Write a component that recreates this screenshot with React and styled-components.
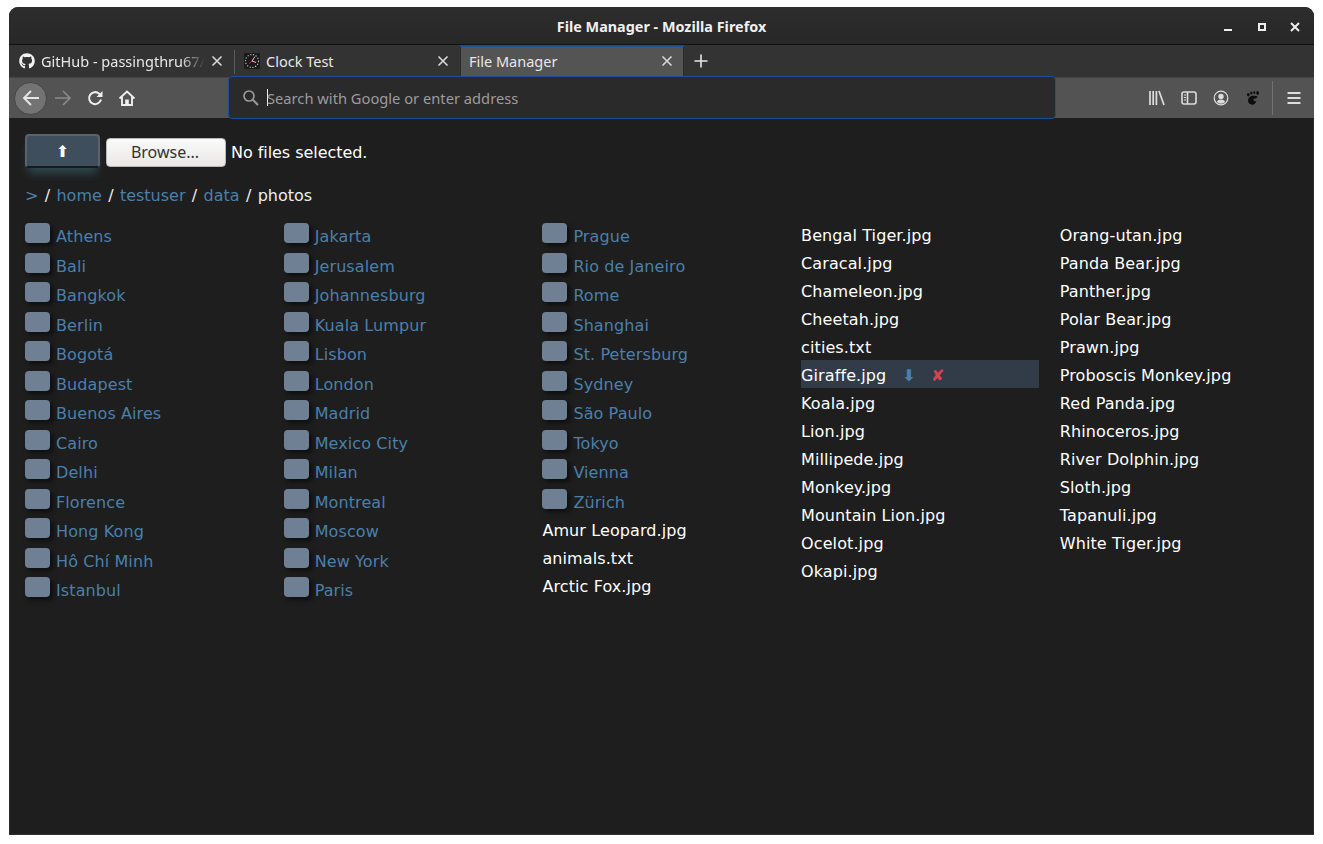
import React from 'react';
import styled, { createGlobalStyle } from 'styled-components';
import { FaGithub } from 'react-icons/fa';

const GlobalStyle = createGlobalStyle`
  html, body {
    margin: 0;
    padding: 0;
    background: #fff;
  }
`;

const Desktop = styled.div`
  width: 1323px;
  height: 844px;
  padding: 7px 9px 9px;
  box-sizing: border-box;
  background: #fff;
`;

const Window = styled.div`
  height: 100%;
  display: flex;
  flex-direction: column;
  background: #1e1e1e;
  border-radius: 9px 9px 0 0;
  overflow: hidden;
  position: relative;
  font-family: 'Noto Sans', sans-serif;
`;

const TitleBar = styled.div`
  height: 38px;
  flex: none;
  box-sizing: border-box;
  display: flex;
  align-items: center;
  justify-content: center;
  position: relative;
  padding-top: 1px;
  background: linear-gradient(#2d2d2d, #272727);
  border-bottom: 1px solid #111;
  color: #f0f0f0;
  font-size: 14.4px;
  font-weight: 700;
`;

const WindowControls = styled.div`
  position: absolute;
  right: 13px;
  top: 14px;
  display: flex;
  gap: 21.5px;
  align-items: center;
  height: 12px;
`;

const TabStrip = styled.div`
  height: 32px;
  flex: none;
  display: flex;
  background: #333;
  color: #e8e8e8;
  font-size: 14.5px;
`;

const Tab = styled.div`
  box-sizing: border-box;
  width: ${(p) => p.$width}px;
  height: 32px;
  display: flex;
  align-items: center;
  gap: 6px;
  padding: 0 11px 0 ${(p) => p.$pad}px;
  background: ${(p) => (p.$active ? '#545454' : 'transparent')};
  box-shadow: ${(p) =>
    p.$active ? 'inset 0 2px 0 #1d4f96, inset 1px 0 0 #2a2a2a, inset -1px 0 0 #2a2a2a' : 'none'};
`;

const TabTitle = styled.span`
  flex: 1;
  white-space: nowrap;
  overflow: hidden;
  ${(p) => p.$fade && `
    -webkit-mask-image: linear-gradient(to right, #000 85%, transparent);
    mask-image: linear-gradient(to right, #000 85%, transparent);
  `}
`;

const TabDivider = styled.div`
  width: 1px;
  height: 24px;
  margin-top: 5px;
  background: #5a5a5a;
  flex: none;
`;

const NewTab = styled.div`
  width: 33px;
  display: flex;
  align-items: center;
  justify-content: center;
`;

const Toolbar = styled.div`
  height: 41px;
  flex: none;
  box-sizing: border-box;
  display: flex;
  align-items: center;
  padding: 0 4px 0 5px;
  background: #535353;
  border-top: 1px solid #444;
  position: relative;
`;

const BackButton = styled.div`
  width: 33px;
  height: 33px;
  box-sizing: border-box;
  border-radius: 50%;
  background: #737373;
  border: 1px solid #454545;
  display: flex;
  align-items: center;
  justify-content: center;
  flex: none;
`;

const NavButton = styled.div`
  width: 32px;
  height: 32px;
  display: flex;
  align-items: center;
  justify-content: center;
  flex: none;
`;

const UrlBar = styled.div`
  position: absolute;
  left: 219px;
  top: -2px;
  width: 828px;
  height: 43px;
  box-sizing: border-box;
  display: flex;
  align-items: center;
  padding-left: 13px;
  gap: 7px;
  background: #2a2a2a;
  border: 1px solid #1d4f96;
  border-radius: 4px;
  color: #9c9c9c;
  font-size: 14.7px;
`;

const Caret = styled.span`
  width: 1px;
  height: 17px;
  background: #eee;
  margin-right: -8px;
`;

const ToolIcons = styled.div`
  margin-left: auto;
  display: flex;
  align-items: center;
  height: 100%;
`;

const ToolIcon = styled.div`
  width: 32px;
  display: flex;
  justify-content: center;
`;

const ToolSep = styled.div`
  width: 1px;
  height: 34px;
  background: #727272;
  margin: 0 5px 0 3px;
`;

const Content = styled.div`
  flex: 1;
  padding: 16px 15px 0;
  font-family: 'DejaVu Sans', sans-serif;
  font-size: 16px;
  color: #fff;
  background: #1e1e1e;
  border-left: 1px solid #2a2a2a;
  border-right: 1px solid #2a2a2a;
  border-bottom: 1px solid #333;
`;

const UploadRow = styled.div`
  display: flex;
  align-items: center;
  height: 34px;
`;

const UploadButton = styled.div`
  box-sizing: border-box;
  width: 75px;
  height: 34px;
  border-radius: 4px;
  background: #3f4e5c;
  border: 2px solid #5c6268;
  border-bottom-color: #1a1a1a;
  box-shadow: 0 8px 10px -3px rgba(70, 130, 145, 0.45);
  display: flex;
  align-items: center;
  justify-content: center;
  font-size: 16px;
`;

const BrowseButton = styled.div`
  box-sizing: border-box;
  width: 120px;
  height: 29px;
  margin: 3px 5px 0 6px;
  padding: 0 2px 2px 0;
  border-radius: 4px;
  background: linear-gradient(#fafafa, #e9e8e6);
  border: 1px solid #b8b8b8;
  color: #333;
  display: flex;
  align-items: center;
  justify-content: center;
  font-family: 'Noto Sans', sans-serif;
  font-size: 16px;
`;

const FileStatus = styled.span`
  padding-top: 2px;
  letter-spacing: -0.05px;
`;

const Breadcrumb = styled.div`
  margin-top: 18px;
  height: 20px;
  line-height: 20px;
  color: #eee;
  white-space: pre;
`;

const Crumb = styled.span`
  color: #4a80ab;
`;

const CrumbSep = styled.span`
  margin: 0 1.25px;
`;

const Columns = styled.div`
  margin-top: 16px;
  display: grid;
  grid-template-columns: repeat(5, 258.7px);
  letter-spacing: 0.1px;
`;

const Column = styled.div`
  display: flex;
  flex-direction: column;
  align-items: flex-start;
`;

const FileList = styled(Column)`
  margin-top: -2px;
`;

const FolderRow = styled.div`
  height: 29.5px;
  display: flex;
  align-items: center;
  gap: 6px;
  color: #4a80ab;
`;

const FolderIcon = styled.span`
  width: 25px;
  height: 20px;
  margin-top: -7px;
  border-radius: 4px;
  background: #6f8094;
  box-shadow: 3px 3px 5px rgba(0, 0, 0, 0.55);
`;

const FileRow = styled.div`
  box-sizing: border-box;
  height: 28px;
  line-height: 32px;
  width: 238px;
  display: flex;
  background: ${(p) => (p.$hover ? '#323c48' : 'transparent')};
`;

const ActionIcon = styled.span`
  width: 15px;
  margin-left: ${(p) => p.$gap}px;
  text-align: center;
  color: ${(p) => p.$color};
  font-size: 16px;
  font-weight: 700;
`;

const col1 = ['Athens', 'Bali', 'Bangkok', 'Berlin', 'Bogotá', 'Budapest', 'Buenos Aires', 'Cairo', 'Delhi', 'Florence', 'Hong Kong', 'Hô Chí Minh', 'Istanbul'];
const col2 = ['Jakarta', 'Jerusalem', 'Johannesburg', 'Kuala Lumpur', 'Lisbon', 'London', 'Madrid', 'Mexico City', 'Milan', 'Montreal', 'Moscow', 'New York', 'Paris'];
const col3 = ['Prague', 'Rio de Janeiro', 'Rome', 'Shanghai', 'St. Petersburg', 'Sydney', 'São Paulo', 'Tokyo', 'Vienna', 'Zürich'];
const col3Files = ['Amur Leopard.jpg', 'animals.txt', 'Arctic Fox.jpg'];
const col4 = ['Bengal Tiger.jpg', 'Caracal.jpg', 'Chameleon.jpg', 'Cheetah.jpg', 'cities.txt', 'Giraffe.jpg', 'Koala.jpg', 'Lion.jpg', 'Millipede.jpg', 'Monkey.jpg', 'Mountain Lion.jpg', 'Ocelot.jpg', 'Okapi.jpg'];
const col5 = ['Orang-utan.jpg', 'Panda Bear.jpg', 'Panther.jpg', 'Polar Bear.jpg', 'Prawn.jpg', 'Proboscis Monkey.jpg', 'Red Panda.jpg', 'Rhinoceros.jpg', 'River Dolphin.jpg', 'Sloth.jpg', 'Tapanuli.jpg', 'White Tiger.jpg'];

const Close = () => (
  <svg width="12" height="12" viewBox="0 0 12 12" style={{ flex: 'none' }}>
    <path d="M1.5 1.5l9 9M10.5 1.5l-9 9" stroke="#d8d8d8" strokeWidth="1.6" />
  </svg>
);

const ClockFavicon = () => (
  <svg width="16" height="16" viewBox="0 0 16 16" style={{ flex: 'none' }}>
    <rect width="16" height="16" fill="#1a1a1a" />
    <circle cx="8" cy="8" r="6.5" fill="none" stroke="#bbb" strokeWidth="1.2" strokeDasharray="1.2 1.6" />
    <path d="M8 8L11 3.500M8 8l4 1.500" stroke="#ccc" strokeWidth="1" />
    <path d="M8 8L5.500 10.500" stroke="#b33" strokeWidth="1" />
  </svg>
);

const Folder = ({ name }) => (
  <FolderRow>
    <FolderIcon />
    {name}
  </FolderRow>
);

const Sep = () => <CrumbSep> / </CrumbSep>;

const App = () => (
  <Desktop>
    <GlobalStyle />
    <Window>
      <TitleBar>
        File Manager - Mozilla Firefox
        <WindowControls>
          <svg width="12" height="12" viewBox="0 0 12 12">
            <rect x="2" y="8" width="8" height="2" fill="#eee" />
          </svg>
          <svg width="12" height="12" viewBox="0 0 12 12">
            <path d="M2 2h8v8H2z M4 4v4h4V4z" fill="#eee" fillRule="evenodd" />
          </svg>
          <svg width="12" height="12" viewBox="0 0 12 12">
            <path d="M2 2l8 8M10 2l-8 8" stroke="#eee" strokeWidth="2" />
          </svg>
        </WindowControls>
      </TitleBar>

      <TabStrip>
        <Tab $width={225} $pad={10}>
          <FaGithub size={16} color="#f2f2f2" style={{ flex: 'none' }} />
          <TabTitle $fade>GitHub - passingthru67/v</TabTitle>
          <Close />
        </Tab>
        <TabDivider />
        <Tab $width={225} $pad={9}>
          <ClockFavicon />
          <TabTitle>Clock Test</TabTitle>
          <Close />
        </Tab>
        <Tab $width={224} $pad={9} $active>
          <TabTitle>File Manager</TabTitle>
          <Close />
        </Tab>
        <NewTab>
          <svg width="16" height="16" viewBox="0 0 16 16">
            <path d="M8 1.500v13M1.500 8h13" stroke="#e8e8e8" strokeWidth="1.600" />
          </svg>
        </NewTab>
      </TabStrip>

      <Toolbar>
        <BackButton>
          <svg width="20" height="20" viewBox="0 0 20 20">
            <path d="M18 10H3M10 3l-7 7 7 7" stroke="#e6e6e6" strokeWidth="1.900" fill="none" />
          </svg>
        </BackButton>
        <NavButton>
          <svg width="20" height="20" viewBox="0 0 20 20">
            <path d="M2 10h15M10 3l7 7-7 7" stroke="#8a8a8a" strokeWidth="1.700" fill="none" />
          </svg>
        </NavButton>
        <NavButton>
          <svg width="18" height="18" viewBox="0 0 18 18">
            <path d="M15 10.500A6 6 0 1 1 13.200 4.700L15 6.500" stroke="#eee" strokeWidth="2" fill="none" />
            <path d="M16.500 2v6h-6z" fill="#eee" />
          </svg>
        </NavButton>
        <NavButton>
          <svg width="18" height="18" viewBox="0 0 18 18">
            <path d="M1.500 9.500L9 2.500l7.500 7M4 8v8h10V8" stroke="#eee" strokeWidth="1.900" fill="none" />
            <rect x="7.200" y="10.500" width="3.600" height="5" fill="#eee" />
          </svg>
        </NavButton>
        <UrlBar>
          <svg width="18" height="18" viewBox="0 0 18 18" style={{ flex: 'none' }}>
            <circle cx="7" cy="7" r="5" stroke="#999" strokeWidth="1.700" fill="none" />
            <path d="M10.800 10.800L16 16" stroke="#999" strokeWidth="2" />
          </svg>
          <Caret />
          Search with Google or enter address
        </UrlBar>
        <ToolIcons>
          <ToolIcon>
            <svg width="16" height="16" viewBox="0 0 16 16">
              <path d="M1 1v14M4.200 1v14M7.400 1v14M10 1l5 14" stroke="#ddd" strokeWidth="1.700" fill="none" />
            </svg>
          </ToolIcon>
          <ToolIcon>
            <svg width="16" height="16" viewBox="0 0 16 16">
              <rect x="1" y="2" width="14" height="12" rx="2" fill="none" stroke="#ddd" strokeWidth="1.600" />
              <path d="M6.500 2v12" stroke="#ddd" strokeWidth="1.600" />
              <path d="M3 5h2M3 7.500h2M3 10h2" stroke="#ddd" strokeWidth="1" />
            </svg>
          </ToolIcon>
          <ToolIcon>
            <svg width="16" height="16" viewBox="0 0 16 16">
              <circle cx="8" cy="8" r="6.800" fill="none" stroke="#ddd" strokeWidth="1.200" />
              <circle cx="8" cy="6.400" r="2.700" fill="#ddd" />
              <path d="M3.800 12c1-2 2.400-2.600 4.200-2.600s3.200.6 4.200 2.600a6 6 0 0 1-8.400 0z" fill="#ddd" />
            </svg>
          </ToolIcon>
          <ToolIcon>
            <svg width="16" height="16" viewBox="0 0 16 16">
              <path d="M7.800 5.800c2.200-.2 3.400.7 4.700.5-.2 1.700-1.300 2.200-2.600 2.300-1.200.1-1.700 1-1.200 1.900.4.700 1.500.9 2.500.5-.4 2.500-2 3.700-4 3.700-2.500 0-4.200-1.800-4.200-4.100 0-2.700 2-4.600 4.800-4.800z" fill="#0d0d0d" />
              <ellipse cx="3.300" cy="4.800" rx="1.300" ry="1.700" fill="#0d0d0d" />
              <ellipse cx="6.300" cy="3.100" rx="1.100" ry="1.500" fill="#0d0d0d" />
              <ellipse cx="9.300" cy="2.700" rx="1" ry="1.400" fill="#0d0d0d" />
              <ellipse cx="12.600" cy="2.900" rx="1.400" ry="1.900" fill="#0d0d0d" />
            </svg>
          </ToolIcon>
          <ToolSep />
          <ToolIcon>
            <svg width="16" height="16" viewBox="0 0 16 16">
              <path d="M1.500 3h13M1.500 8h13M1.500 13h13" stroke="#ddd" strokeWidth="1.800" />
            </svg>
          </ToolIcon>
        </ToolIcons>
      </Toolbar>

      <Content>
        <UploadRow>
          <UploadButton>⬆</UploadButton>
          <BrowseButton>Browse...</BrowseButton>
          <FileStatus>No files selected.</FileStatus>
        </UploadRow>
        <Breadcrumb>
          <Crumb>&gt;</Crumb><Sep /><Crumb>home</Crumb><Sep /><Crumb>testuser</Crumb><Sep /><Crumb>data</Crumb><Sep />photos
        </Breadcrumb>
        <Columns>
          <Column>{col1.map((n) => <Folder key={n} name={n} />)}</Column>
          <Column>{col2.map((n) => <Folder key={n} name={n} />)}</Column>
          <Column>
            {col3.map((n) => <Folder key={n} name={n} />)}
            <FileList>{col3Files.map((n) => <FileRow key={n}>{n}</FileRow>)}</FileList>
          </Column>
          <FileList>
            {col4.map((n) =>
              n === 'Giraffe.jpg' ? (
                <FileRow key={n} $hover>
                  {n}
                  <ActionIcon $color="#4a80ab" $gap={15}>⬇</ActionIcon>
                  <ActionIcon $color="#d9434f" $gap={14}>✘</ActionIcon>
                </FileRow>
              ) : (
                <FileRow key={n}>{n}</FileRow>
              )
            )}
          </FileList>
          <FileList>{col5.map((n) => <FileRow key={n}>{n}</FileRow>)}</FileList>
        </Columns>
      </Content>
    </Window>
  </Desktop>
);

export default App;
